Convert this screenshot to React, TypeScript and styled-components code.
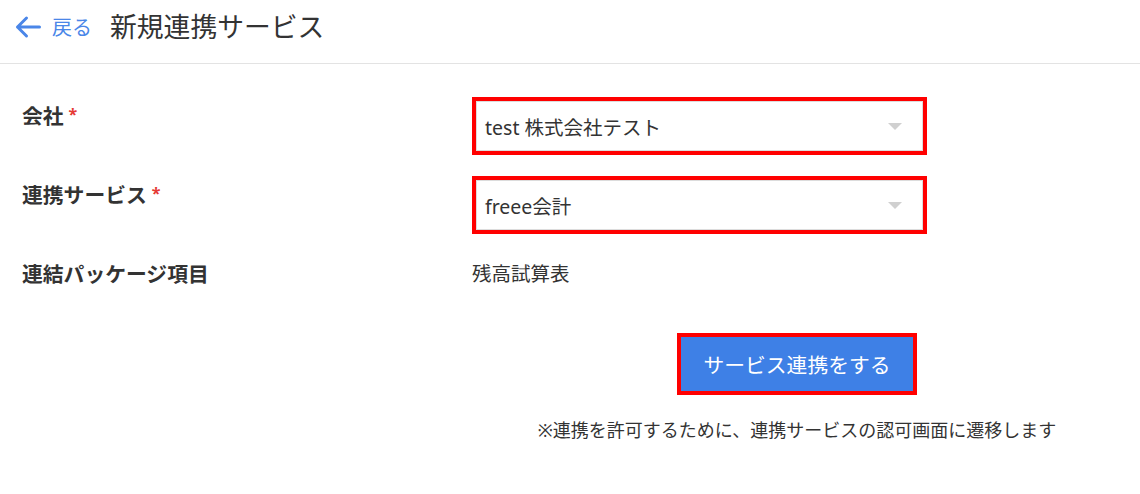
import styled, { createGlobalStyle } from "styled-components";

const GlobalStyle = createGlobalStyle`
	html, body {
		margin: 0;
		padding: 0;
		background: #ffffff;
	}
	body {
		font-family: "Noto Sans", "Noto Sans CJK JP", sans-serif;
		color: #333333;
	}
`;

const Page = styled.div`
	width: 1140px;
	min-height: 494px;
	background: #ffffff;
`;

const Header = styled.header`
	display: flex;
	align-items: center;
	height: 53px;
	padding: 0 0 10px 15px;
	border-bottom: 1px solid #e3e3e3;
`;

const BackLink = styled.a`
	display: flex;
	align-items: center;
	gap: 11px;
	color: #4a86e8;
	font-size: 20px;
	text-decoration: none;
	cursor: pointer;
`;

const Title = styled.h1`
	margin: 0 0 0 18px;
	font-size: 26.8px;
	font-weight: 400;
	color: #333333;
	line-height: 1.4;
`;

const Form = styled.form`
	display: grid;
	grid-template-columns: 450px 1fr;
	row-gap: 21px;
	padding: 33px 18px 0 22px;
`;

const Label = styled.div`
	padding-top: 4px;
	font-size: 20.8px;
	font-weight: 700;
	line-height: 1.5;
	color: #333333;
`;

const Required = styled.span`
	color: #e53935;
	font-size: 16px;
	vertical-align: top;
	margin-left: 5px;
	position: relative;
	top: 1px;
`;

const Highlight = styled.div<{ $width: number }>`
	width: ${(p) => p.$width}px;
	box-sizing: border-box;
	border: 4px solid #ff0000;
`;

const SelectBox = styled.div`
	display: flex;
	align-items: center;
	justify-content: space-between;
	height: 50px;
	box-sizing: border-box;
	padding: 0 20px 0 8px;
	border: 1px solid #dcdcdc;
	background: #ffffff;
	font-size: 19.5px;
	color: #333333;
`;

const Caret = styled.span`
	width: 0;
	height: 0;
	border-left: 7px solid transparent;
	border-right: 7px solid transparent;
	border-top: 7px solid #d0d0d0;
`;

const Value = styled.div`
	padding-top: 4px;
	font-size: 19.5px;
	line-height: 1.5;
	color: #333333;
`;

const Actions = styled.div`
	grid-column: 2;
	display: flex;
	flex-direction: column;
	align-items: center;
	gap: 22px;
	margin-top: 22px;
`;

const SubmitButton = styled.button`
	display: block;
	width: 232px;
	height: 54px;
	border: none;
	background: #3e80e6;
	color: #ffffff;
	font-family: "Noto Sans", "Noto Sans CJK JP", sans-serif;
	font-size: 20.8px;
	cursor: pointer;
`;

const Note = styled.p`
	margin: 0;
	font-size: 18px;
	line-height: 1.5;
	color: #333333;
`;

const ArrowIcon = () => (
	<svg width="26" height="24" viewBox="0 0 26 24" fill="none">
		<path
			d="M24.5 12H2.5M11.5 3L2.5 12l9 9"
			stroke="#4a86e8"
			strokeWidth="3"
			strokeLinecap="round"
			strokeLinejoin="round"
		/>
	</svg>
);

const App = () => {
	return (
		<Page>
			<GlobalStyle />
			<Header>
				<BackLink>
					<ArrowIcon />
					戻る
				</BackLink>
				<Title>新規連携サービス</Title>
			</Header>
			<Form onSubmit={(e) => e.preventDefault()}>
				<Label>
					会社<Required>*</Required>
				</Label>
				<Highlight $width={455}>
					<SelectBox>
						test 株式会社テスト
						<Caret />
					</SelectBox>
				</Highlight>

				<Label>
					連携サービス<Required>*</Required>
				</Label>
				<Highlight $width={455}>
					<SelectBox>
						freee会計
						<Caret />
					</SelectBox>
				</Highlight>

				<Label>連結パッケージ項目</Label>
				<Value>残高試算表</Value>

				<Actions>
					<Highlight $width={240}>
						<SubmitButton type="submit">サービス連携をする</SubmitButton>
					</Highlight>
					<Note>※連携を許可するために、連携サービスの認可画面に遷移します</Note>
				</Actions>
			</Form>
		</Page>
	);
};

export default App;
